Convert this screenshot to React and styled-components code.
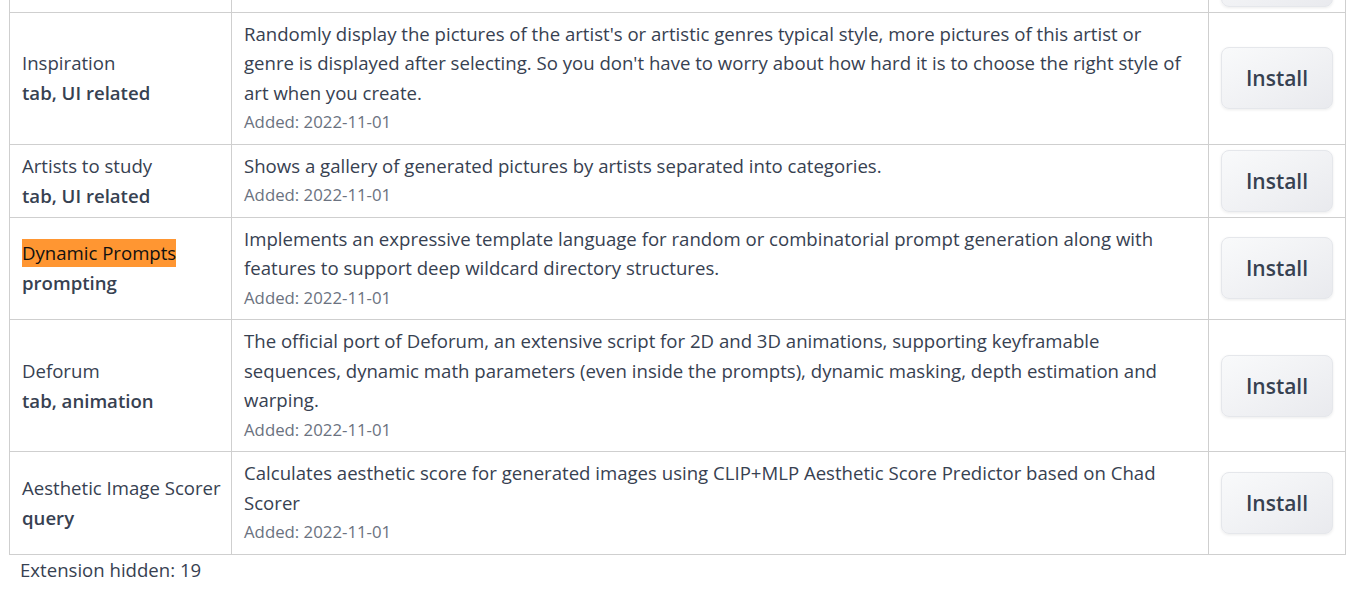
import React from 'react';
import styled, { createGlobalStyle } from 'styled-components';

const GlobalStyle = createGlobalStyle`
  html, body {
    margin: 0;
    padding: 0;
    background: #ffffff;
  }
  body {
    font-family: "Open Sans", Lato, "Liberation Sans", sans-serif;
    color: #374151;
    overflow: hidden;
  }
`;

const Page = styled.div`
  width: 1357px;
  height: 589px;
  overflow: hidden;
`;

const Table = styled.table`
  margin: -61.5px 0 0 9px;
  width: 1337px;
  border-collapse: collapse;
  table-layout: fixed;
  font-size: 18.6px;
  line-height: 30px;
`;

const Cell = styled.td`
  border: 1px solid #cfcfcf;
  padding: 6px 12px;
  vertical-align: middle;
  width: ${(p) => p.$width || 'auto'};
`;

const ButtonCell = styled(Cell)`
  padding: 5px 12px;
`;

const Name = styled.div`
  color: #374151;
  white-space: nowrap;
`;

const Tags = styled.div`
  font-weight: 600;
  color: #374151;
`;

const Highlight = styled.mark`
  background: #ff9632;
  color: #111;
  padding: 1px 0 2px;
`;

const Desc = styled.div`
  color: #374151;
  line-height: 29.5px;
`;

const Added = styled.div`
  font-size: 16.8px;
  line-height: 30.5px;
  color: #6b7280;
`;

const InstallButton = styled.button`
  display: block;
  width: 100%;
  height: 62px;
  border: 1px solid #e5e7eb;
  border-radius: 8px;
  background: linear-gradient(to bottom right, #f9fafb, #e9eaee);
  box-shadow: 0 1px 3px rgba(0, 0, 0, 0.08);
  font-family: inherit;
  font-size: 21px;
  font-weight: 600;
  color: #374151;
  cursor: pointer;
`;

const Footer = styled.p`
  margin: 0;
  padding-left: 20px;
  font-size: 18.6px;
  line-height: 30px;
`;

const extensions = [
  {
    name: 'Image browser',
    tags: 'tab, UI related',
    desc: 'Provides an interface to browse created images in the web browser.',
  },
  {
    name: 'Inspiration',
    tags: 'tab, UI related',
    desc: "Randomly display the pictures of the artist's or artistic genres typical style, more pictures of this artist or genre is displayed after selecting. So you don't have to worry about how hard it is to choose the right style of art when you create.",
  },
  {
    name: 'Artists to study',
    tags: 'tab, UI related',
    desc: 'Shows a gallery of generated pictures by artists separated into categories.',
  },
  {
    name: 'Dynamic Prompts',
    tags: 'prompting',
    desc: 'Implements an expressive template language for random or combinatorial prompt generation along with features to support deep wildcard directory structures.',
    highlight: true,
  },
  {
    name: 'Deforum',
    tags: 'tab, animation',
    desc: 'The official port of Deforum, an extensive script for 2D and 3D animations, supporting keyframable sequences, dynamic math parameters (even inside the prompts), dynamic masking, depth estimation and warping.',
  },
  {
    name: 'Aesthetic Image Scorer',
    tags: 'query',
    desc: 'Calculates aesthetic score for generated images using CLIP+MLP Aesthetic Score Predictor based on Chad Scorer',
  },
];

export default function App() {
  return (
    <Page>
      <GlobalStyle />
      <Table>
        <tbody>
          {extensions.map((ext) => (
            <tr key={ext.name}>
              <Cell $width="197px">
                <Name>{ext.highlight ? <Highlight>{ext.name}</Highlight> : ext.name}</Name>
                <Tags>{ext.tags}</Tags>
              </Cell>
              <Cell>
                <Desc>{ext.desc}</Desc>
                <Added>Added: 2022-11-01</Added>
              </Cell>
              <ButtonCell $width="112px">
                <InstallButton>Install</InstallButton>
              </ButtonCell>
            </tr>
          ))}
        </tbody>
      </Table>
      <Footer>Extension hidden: 19</Footer>
    </Page>
  );
}
